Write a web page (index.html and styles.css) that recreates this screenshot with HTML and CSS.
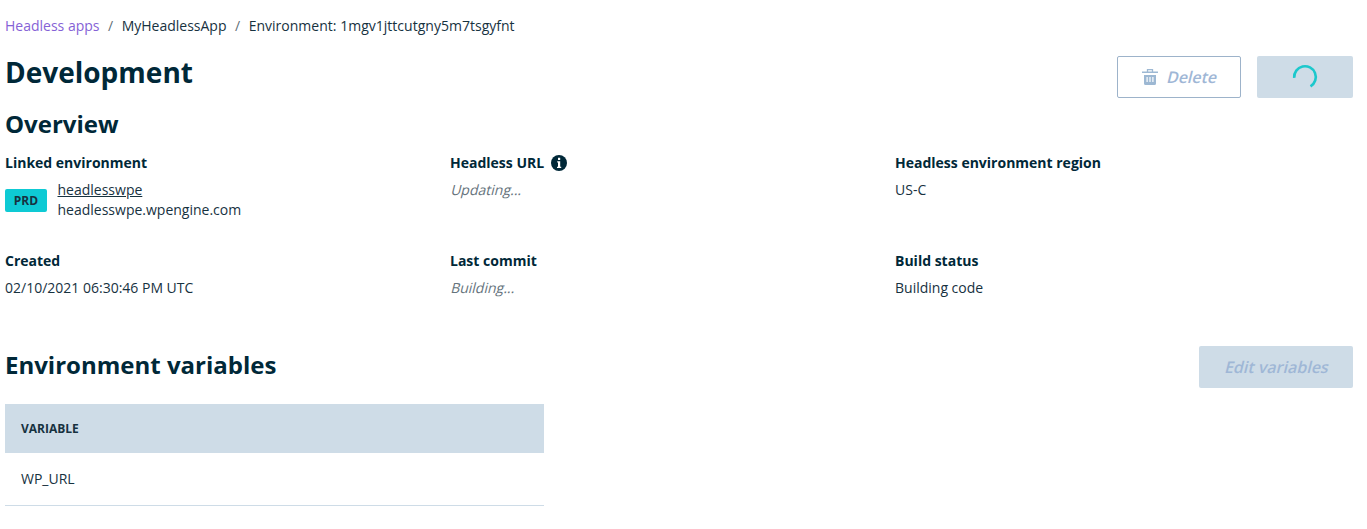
FILE: index.html
```html
<!DOCTYPE html>
<html lang="en">
<head>
<meta charset="utf-8">
<title>Development</title>
<link rel="stylesheet" href="styles.css">
</head>
<body>
<nav class="breadcrumb"><a class="crumb-link" href="#">Headless apps</a><span class="sep">/</span><span>MyHeadlessApp</span><span class="sep">/</span><span class="crumb-current">Environment: 1mgv1jttcutgny5m7tsgyfnt</span></nav>
<header class="page-head">
  <h1>Development</h1>
  <div class="actions">
    <button class="btn btn-outline"><svg class="trash" width="16" height="18" viewBox="0 0 16 18"><path d="M5.500 4V1.700h5V4" fill="none" stroke="#9db8d3" stroke-width="1.300"/><path d="M0 3.500h16V5H0z" fill="#9db8d3"/><path fill="#9db8d3" fill-rule="evenodd" d="M2 7h12v8.500q0 1.500-1.500 1.500h-9Q2 17 2 15.500zM4.500 9v5h1.200V9zM7.400 9v5h1.200V9zM10.300 9v5h1.200V9z"/></svg><span class="slanted">Delete</span></button>
    <button class="btn btn-busy" aria-label="Loading"><svg width="26" height="26" viewBox="0 0 26 26"><path d="M2.200 13.800A10.800 10.800 0 1 1 18.500 22.300" fill="none" stroke="#1cc8cc" stroke-width="2.600"/></svg></button>
  </div>
</header>
<section>
  <h2 class="overview-title">Overview</h2>
  <div class="facts">
    <div class="fact"><h3>Linked environment</h3>
      <div class="env"><span class="badge">PRD</span><div class="env-names"><a href="#">headlesswpe</a><span>headlesswpe.wpengine.com</span></div></div></div>
    <div class="fact"><h3>Headless URL <svg class="info" width="16" height="16" viewBox="0 0 16 16"><circle cx="8" cy="8" r="8" fill="#002838"/><path fill="#fff" d="M7 2.700h2.200v2.200H7zM6.200 6.200h3v5.600h1V13H6v-1.200h1V7.400h-.8z"/></svg></h3><p class="pending"><span class="slanted">Updating...</span></p></div>
    <div class="fact"><h3>Headless environment region</h3><p>US-C</p></div>
    <div class="fact"><h3>Created</h3><p>02/10/2021 06:30:46 PM UTC</p></div>
    <div class="fact"><h3>Last commit</h3><p class="pending"><span class="slanted">Building...</span></p></div>
    <div class="fact"><h3>Build status</h3><p>Building code</p></div>
  </div>
</section>
<section>
  <div class="vars-head"><h2>Environment variables</h2><button class="btn btn-disabled"><span class="slanted">Edit variables</span></button></div>
  <table class="vars"><thead><tr><th>VARIABLE</th></tr></thead><tbody><tr><td>WP_URL</td></tr></tbody></table>
</section>
</body>
</html>
```
FILE: styles.css
```css
* { box-sizing: border-box; }
body { margin: 0; padding: 16px 14px 0 5px; background: #fff; color: #17323f; font: 14px/20px "Open Sans", sans-serif; }
h1, h2, h3, p { margin: 0; }
h1, h2, h3 { color: #002838; }
.breadcrumb { display: flex; height: 20px; }
.crumb-link { color: #8562d6; text-decoration: none; }
.sep { margin: 0 8.500px; color: #5f6f78; }
.crumb-current { letter-spacing: 0.015px; }
.page-head { display: flex; justify-content: space-between; height: 62px; padding-top: 20px; }
h1 { margin-top: -1px; font-size: 28px; line-height: 34px; font-weight: 700; }
h2 { font-size: 24px; line-height: 32px; font-weight: 700; }
.actions { display: flex; gap: 16px; }
.btn { display: flex; align-items: center; justify-content: center; height: 42px; padding: 0; border: 0; border-radius: 2px; font: 600 16px/20px "Open Sans", sans-serif; color: #9fb7d6; background: #cedce7; }
.btn-outline { width: 124px; gap: 8px; border: 1px solid #9db3ca; background: #fff; }
.btn-busy { width: 96px; }
.btn-disabled { width: 154px; }
.slanted { display: inline-block; transform: skewX(-14deg); transform-origin: 0 78%; }
.overview-title { margin-top: 10px; }
.facts { display: grid; grid-template-columns: repeat(3, 445px); grid-auto-rows: 98px; margin-top: 13px; }
h3 { display: flex; align-items: center; gap: 7px; height: 20px; margin-bottom: 7px; font-size: 14px; line-height: 20px; font-weight: 700; }
.info { margin-top: -1px; }
.pending { color: #65737c; }
.env { display: flex; align-items: center; gap: 10.500px; }
.badge { width: 42px; height: 23px; border-radius: 2px; background: #0ecad4; font-size: 12px; font-weight: 700; line-height: 23px; text-align: center; }
.env-names { display: flex; flex-direction: column; }
.env-names a { color: inherit; }
.vars-head { display: flex; justify-content: space-between; height: 58px; margin-top: -3px; }
.vars-head h2 { margin-top: 3px; }
.vars { width: 539px; border-collapse: collapse; }
.vars th { height: 49px; padding: 0 16px; background: #cedce7; font-size: 12px; font-weight: 700; text-align: left; }
.vars td { height: 52px; padding: 0 16px; border-bottom: 1px solid #cedce7; }
```
